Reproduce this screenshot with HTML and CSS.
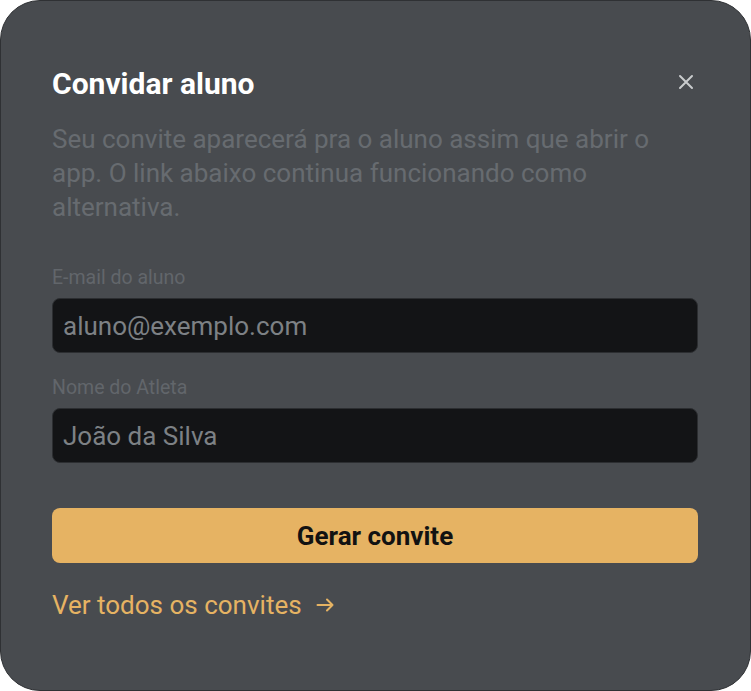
FILE: index.html
```html
<!DOCTYPE html>
<html lang="pt-BR">
  <head>
    <meta charset="UTF-8" />
    <title>Convidar aluno</title>
    <link rel="stylesheet" href="styles.css">
  </head>
  <body>
    <div class="modal">
      <div class="modal_head">
        <h2 class="title">Convidar aluno</h2>
        <button class="close" type="button" aria-label="Fechar">
          <svg width="16" height="16" viewBox="0 0 16 16">
            <path d="M2 2L14 14M14 2L2 14" stroke="#c9cbcd" stroke-width="2" stroke-linecap="round" />
          </svg>
        </button>
      </div>
      <p class="desc">
        Seu convite aparecerá pra o aluno assim que abrir o app. O link abaixo continua funcionando como alternativa.
      </p>
      <form class="form">
        <label class="field">
          <span class="label">E-mail do aluno</span>
          <input class="input" type="email" placeholder="aluno@exemplo.com">
        </label>
        <label class="field">
          <span class="label">Nome do Atleta</span>
          <input class="input" type="text" placeholder="João da Silva">
        </label>
        <button class="btn" type="button">Gerar convite</button>
      </form>
      <a class="link" href="#">
        Ver todos os convites
        <svg class="arrow" width="18" height="18" viewBox="0 0 18 18">
          <path d="M1.5 9H16.5M11 3.5L16.5 9L11 14.5" fill="none" stroke="#e6b363" stroke-width="2" stroke-linecap="round" stroke-linejoin="round" />
        </svg>
      </a>
    </div>
  </body>
</html>
```

FILE: styles.css
```css
* {
  box-sizing: border-box;
}

html,
body {
  margin: 0;
  background: #ffffff;
}

body {
  font-family: Roboto, "Liberation Sans", sans-serif;
}

.modal {
  width: 751px;
  height: 691px;
  padding: 67px 52px 0 51px;
  background: #484b4f;
  border: 1px solid #2f3134;
  border-radius: 40px;
}

.modal_head {
  display: flex;
  justify-content: space-between;
  align-items: center;
  height: 32px;
}

.title {
  margin: 0;
  font-size: 30px;
  line-height: 32px;
  font-weight: 700;
  color: #ffffff;
}

.close {
  margin: -4px 0 0 0;
  padding: 4px;
  border: none;
  background: none;
  display: flex;
  cursor: pointer;
}

.desc {
  margin: 22px 0 0;
  font-size: 26px;
  line-height: 34px;
  color: #676b70;
}

.form {
  display: flex;
  flex-direction: column;
  margin-top: 44px;
}

.field {
  display: flex;
  flex-direction: column;
  gap: 10px;
  margin-bottom: 25px;
}

.label {
  font-size: 19.5px;
  line-height: 20px;
  color: #62666b;
}

.input {
  height: 55px;
  padding: 0 10px;
  background: #131416;
  border: 1px solid #2c2e31;
  border-radius: 8px;
  font-family: inherit;
  font-size: 26px;
  color: #e0e0e0;
  outline: none;
}

.input::placeholder {
  color: #7d8185;
}

.btn {
  margin-top: 20px;
  height: 55px;
  border: none;
  border-radius: 8px;
  background: #e6b363;
  font-family: inherit;
  font-size: 26px;
  font-weight: 700;
  color: #121212;
  cursor: pointer;
}

.link {
  display: inline-flex;
  align-items: center;
  gap: 14px;
  margin-top: 27px;
  font-size: 26px;
  line-height: 30px;
  color: #e6b363;
  text-decoration: none;
}
```
